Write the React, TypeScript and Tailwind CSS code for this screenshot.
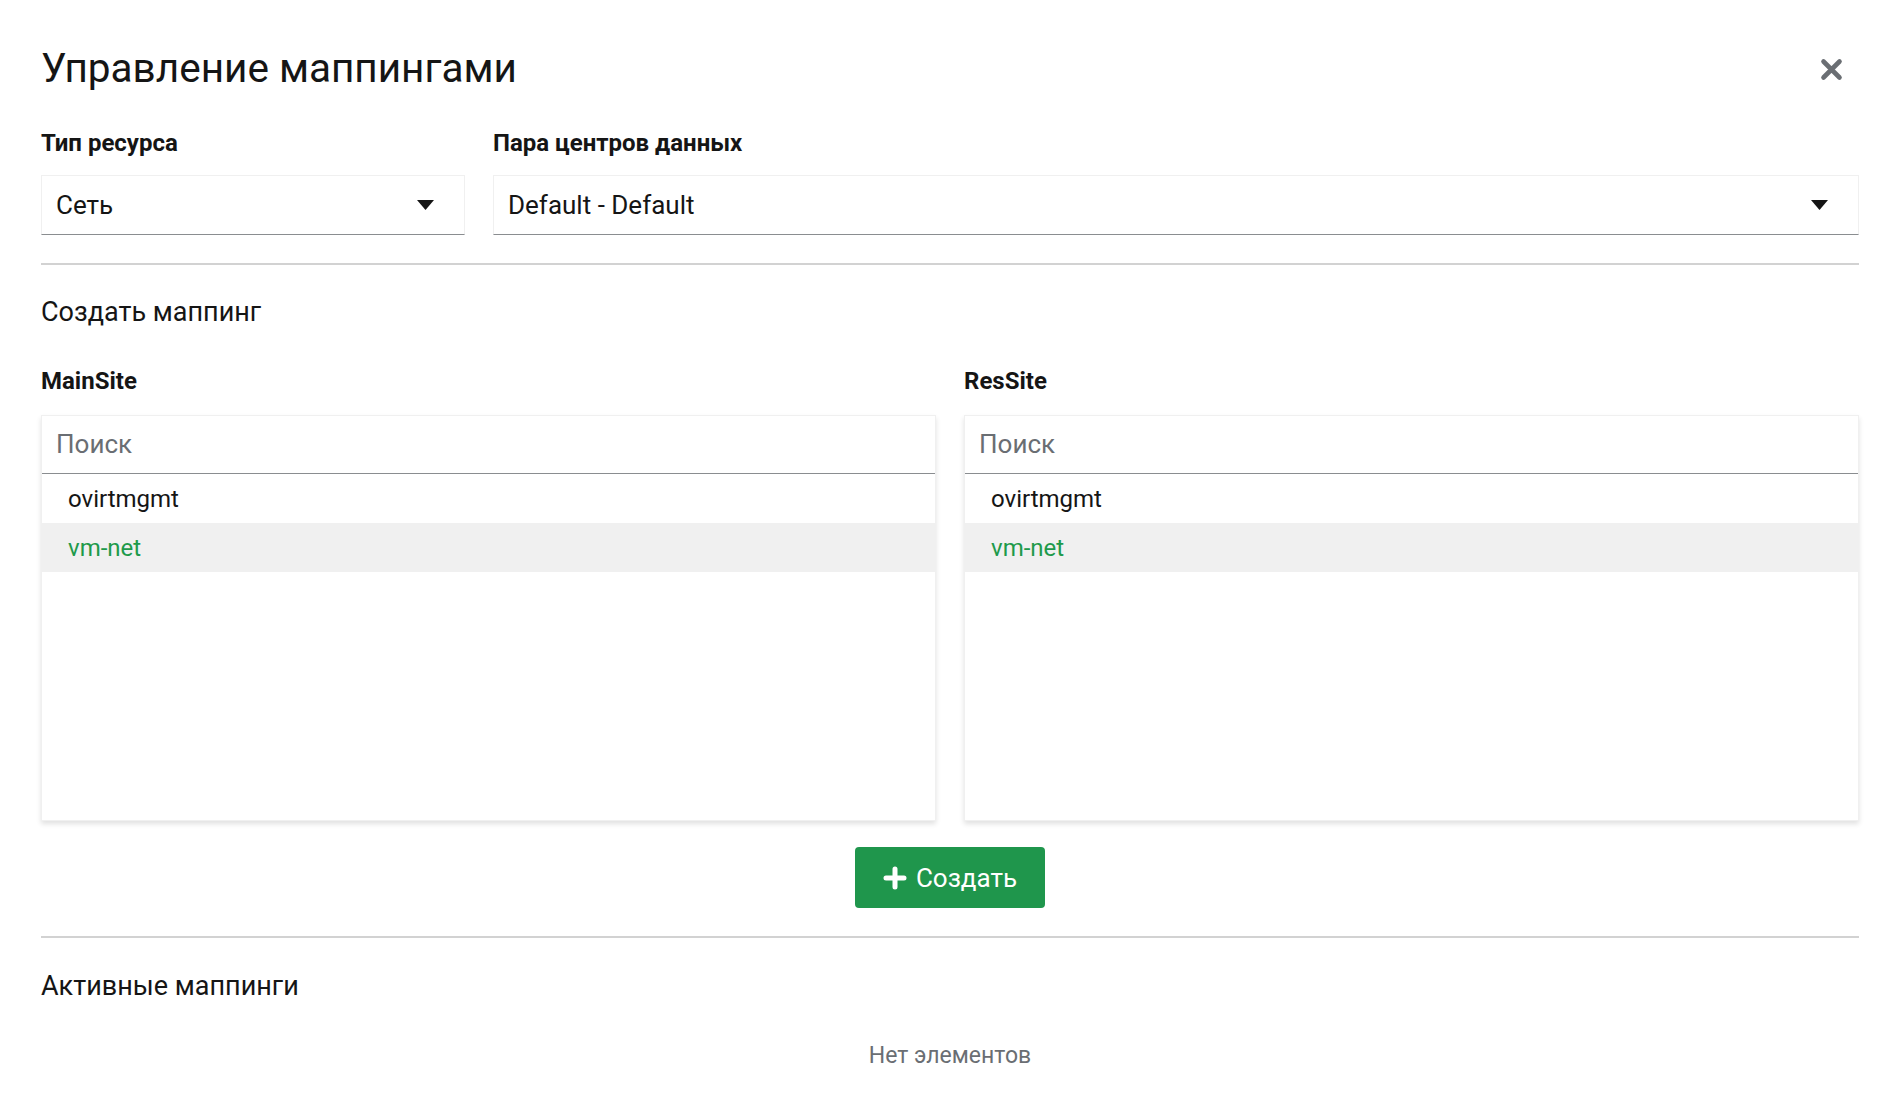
const font = { fontFamily: "Roboto, 'Noto Sans', sans-serif" };

type ListBoxProps = {
	title: string;
	items: string[];
	selected: string;
};

const Caret = () => (
	<svg width="17" height="10" viewBox="0 0 17 10" className="shrink-0">
		<path d="M0 0 H17 L8.5 10 Z" fill="#151515" />
	</svg>
);

const SelectBox = ({ value }: { value: string }) => (
	<div className="flex h-[60px] items-center justify-between border border-[#f0f0f0] border-b-[#8a8d90] bg-white pl-[14px] pr-[30px]">
		<span className="text-[26px] text-[#151515]">{value}</span>
		<Caret />
	</div>
);

const ListBox = ({ title, items, selected }: ListBoxProps) => (
	<div className="flex flex-col">
		<h3 className="mb-[18px] text-[24px] font-bold leading-[32px] text-[#151515]">{title}</h3>
		<div className="flex h-[406px] flex-col border border-[#f0f0f0] bg-white shadow-[0_3px_5px_rgba(0,0,0,0.12)]">
			<div className="flex h-[58px] shrink-0 items-center border-b border-[#8a8d90] pl-[14px]">
				<span className="text-[26px] text-[#6a6e73]">Поиск</span>
			</div>
			{items.map((item) => (
				<div
					key={item}
					className={`flex h-[49px] shrink-0 items-center pl-[26px] text-[24px] ${
						item === selected ? "bg-[#f0f0f0] text-[#1e9a4b]" : "text-[#151515]"
					}`}
				>
					{item}
				</div>
			))}
		</div>
	</div>
);

export default function App() {
	return (
		<div className="min-h-screen bg-white pl-[41px] pr-[39px] pt-[44px] pb-[40px]" style={font}>
			<div className="flex h-[48px] items-center justify-between">
				<h1 className="text-[40.5px] font-normal leading-[48px] text-[#151515]">Управление маппингами</h1>
				<button className="mr-[16px] mt-[2px] flex h-[23px] w-[23px] items-center justify-center">
					<svg width="23" height="23" viewBox="0 0 23 23">
						<path d="M3.5 3.5 L19.5 19.5 M19.5 3.5 L3.5 19.5" stroke="#6a6e73" strokeWidth="4.6" strokeLinecap="round" />
					</svg>
				</button>
			</div>

			<div className="mt-[35px] flex gap-[28px]">
				<div className="flex w-[424px] flex-col">
					<label className="mb-[16px] text-[24px] font-bold leading-[32px] text-[#151515]">Тип ресурса</label>
					<SelectBox value="Сеть" />
				</div>
				<div className="flex flex-1 flex-col">
					<label className="mb-[16px] text-[24px] font-bold leading-[32px] text-[#151515]">
						Пара центров данных
					</label>
					<SelectBox value="Default - Default" />
				</div>
			</div>

			<div className="mt-[28px] h-[2px] bg-[#d2d2d2]" />

			<h2 className="mt-[30px] text-[27px] leading-[34px] text-[#151515]">Создать маппинг</h2>

			<div className="mt-[36px] grid grid-cols-2 gap-[28px]">
				<ListBox title="MainSite" items={["ovirtmgmt", "vm-net"]} selected="vm-net" />
				<ListBox title="ResSite" items={["ovirtmgmt", "vm-net"]} selected="vm-net" />
			</div>

			<div className="mt-[26px] flex justify-center">
				<button className="flex h-[61px] w-[190px] items-center justify-center gap-[9px] rounded-[4px] bg-[#1f964c] text-white">
					<svg width="24" height="24" viewBox="0 0 24 24">
						<path d="M12 3 V21 M3 12 H21" stroke="white" strokeWidth="5" strokeLinecap="round" />
					</svg>
					<span className="text-[26px] leading-none">Создать</span>
				</button>
			</div>

			<div className="mt-[28px] h-[2px] bg-[#d2d2d2]" />

			<h2 className="mt-[31px] text-[27px] leading-[34px] text-[#151515]">Активные маппинги</h2>

			<p className="mt-[38px] text-center text-[23px] leading-[30px] text-[#6a6e73]">Нет элементов</p>
		</div>
	);
}
